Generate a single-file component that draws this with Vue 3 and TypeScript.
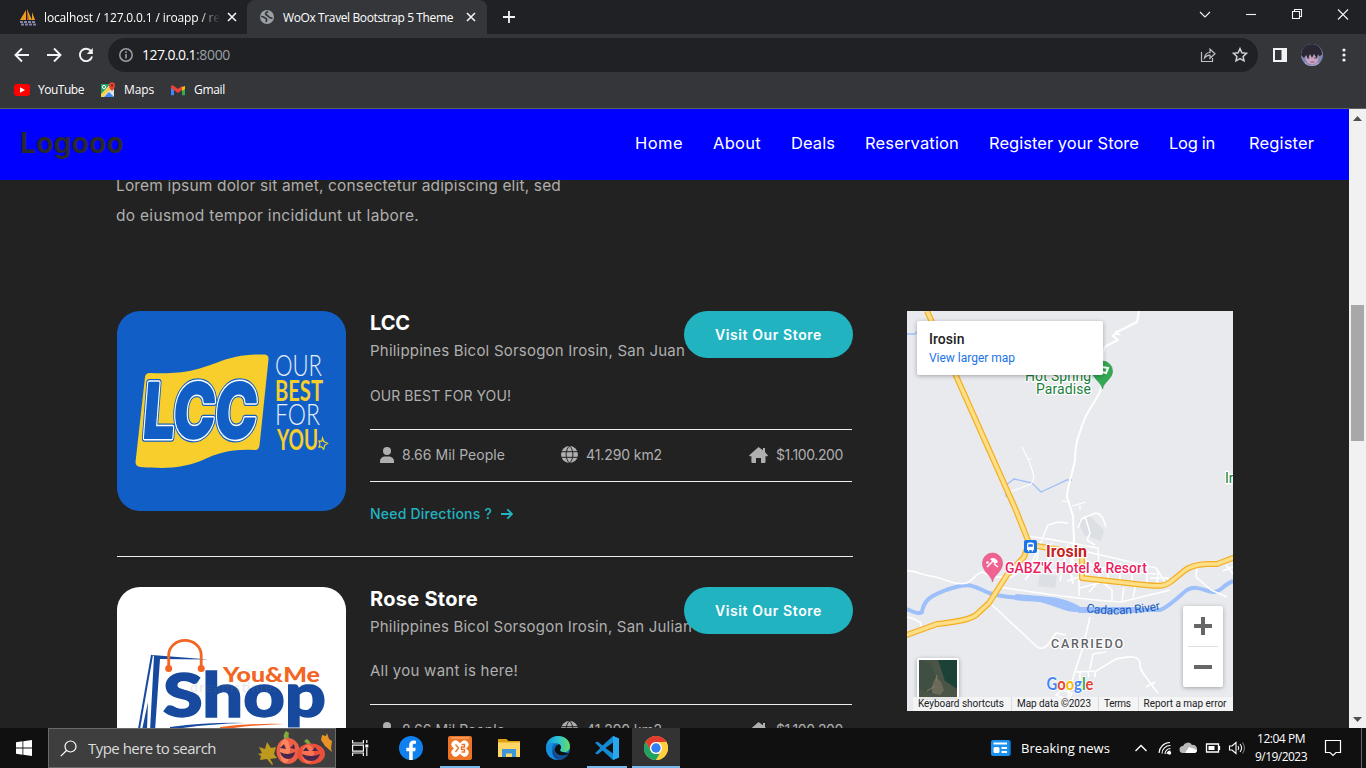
<script setup lang="ts">
import type { Directive } from 'vue'

interface Store {
  id: string
  name: string
  nameWidth: number
  place: string
  placeWidth: number
  blurb: string
  blurbWidth: number
}

interface NavLink {
  label: string
  width: number
  gap: number
}

// Tracks a single line of text so that it occupies the given width in pixels.
const fit = (el: HTMLElement, width: number) => {
  el.style.letterSpacing = '0px'
  const natural = el.getBoundingClientRect().width
  const count = (el.textContent ?? '').trim().length
  if (count > 0) el.style.letterSpacing = `${((width - natural) / count).toFixed(3)}px`
}
const vFit: Directive<HTMLElement, number> = {
  mounted: (el, binding) => fit(el, binding.value),
}

const links: NavLink[] = [
  { label: 'Home', width: 48, gap: 0 },
  { label: 'About', width: 48, gap: 30 },
  { label: 'Deals', width: 44, gap: 30 },
  { label: 'Reservation', width: 94, gap: 30 },
  { label: 'Register your Store', width: 150, gap: 30 },
  { label: 'Log in', width: 46, gap: 30 },
  { label: 'Register', width: 65, gap: 34 },
]

const stores: Store[] = [
  {
    id: 'lcc',
    name: 'LCC',
    nameWidth: 40,
    place: 'Philippines Bicol Sorsogon Irosin, San Juan',
    placeWidth: 315,
    blurb: 'OUR BEST FOR YOU!',
    blurbWidth: 141,
  },
  {
    id: 'rose',
    name: 'Rose Store',
    nameWidth: 108,
    place: 'Philippines Bicol Sorsogon Irosin, San Julian',
    placeWidth: 322,
    blurb: 'All you want is here!',
    blurbWidth: 148,
  },
]
</script>

<template>
  <div class="screen">
    <header class="browser">
      <div class="tabs">
        <div class="tab idle">
          <svg class="fav" width="18" height="18" viewBox="0 0 18 18">
            <path d="M1 12 7 2v10zM8 12V1l5 11zM13 4l3 8h-3z" fill="#f09a26" />
            <path d="M8 1l2 11H8z" fill="#a95f12" />
            <path d="M1 14h16M2 16.500h15" stroke="#8183a8" stroke-width="2" stroke-dasharray="3 1" />
          </svg>
          <span class="tab-text"><span v-fit="176">localhost / 127.0.0.1 / iroapp / re</span></span>
          <svg class="x" width="10" height="10" viewBox="0 0 10 10"><path d="M1 1l8 8M9 1l-8 8" /></svg>
        </div>
        <div class="tab active">
          <svg class="globe" width="14" height="14" viewBox="0 0 14 14">
            <circle cx="7" cy="7" r="7" fill="#9aa0a6" />
            <path d="M1 6.500c3 0 3.500 1.500 5 2 .8.400.7 2 0 3.500M12.500 8c-2 .5-3-.5-4-1.500S6 5 5.500 3.800 7 2.300 8 1.300" fill="none" stroke="#35363a" stroke-width="1.700" />
          </svg>
          <span v-fit="170" class="t">WoOx Travel Bootstrap 5 Theme</span>
          <svg class="x" width="10" height="10" viewBox="0 0 10 10"><path d="M1 1l8 8M9 1l-8 8" /></svg>
        </div>
        <svg class="plus" width="12" height="12" viewBox="0 0 12 12"><path d="M6 0v12M0 6h12" /></svg>
        <div class="window">
          <svg width="46" height="28" viewBox="0 0 46 28"><path d="M18 12l5 5 5-5" /></svg>
          <svg width="46" height="28" viewBox="0 0 46 28"><path d="M18 14.500h10" /></svg>
          <svg width="46" height="28" viewBox="0 0 46 28"><path d="M18.500 11.500h7v7h-7zM20.500 11V9.500h7v7H26" /></svg>
          <svg width="46" height="28" viewBox="0 0 46 28"><path d="M18 9.500l10 10M28 9.500l-10 10" /></svg>
        </div>
      </div>

      <div class="toolbar">
        <svg class="act" width="32" height="32" viewBox="0 0 32 32"><path d="M23 16H10M16 9.500L9.500 16l6.500 6.500" /></svg>
        <svg class="act" width="32" height="32" viewBox="0 0 32 32"><path d="M9 16h13M16 9.500l6.500 6.500-6.500 6.500" /></svg>
        <svg class="act" width="32" height="32" viewBox="0 0 32 32"><path d="M21.300 12.500a6.200 6.200 0 1 0 .8 5" /><path d="M22.800 9v6h-6z" fill="#f1f3f4" stroke="none" /></svg>
        <div class="omnibox">
          <svg width="14" height="14" viewBox="0 0 14 14"><circle cx="7" cy="7" r="6.200" fill="none" stroke="#9aa0a6" stroke-width="1.500" /><path d="M7 6v4.500M7 3.300v1.600" stroke="#9aa0a6" stroke-width="1.600" /></svg>
          <span class="url"><span v-fit="54">127.0.0.1</span><span v-fit="34" class="port">:8000</span></span>
          <svg class="share" width="16" height="16" viewBox="0 0 16 16"><path d="M1.500 5v9.500h11V11M4.500 11c.5-4 2.500-5.500 5.500-5.500V2.200L15 6.800l-5 4.500V8.200c-2.500 0-4 .8-5.500 2.800z" fill="none" stroke="#bdc1c6" stroke-width="1.200" /></svg>
          <svg width="16" height="16" viewBox="0 0 16 16"><path d="M8 1.600l1.900 4.200 4.600.5-3.400 3.100.9 4.500L8 11.600l-4 2.300.9-4.500L1.500 6.300l4.600-.5z" fill="none" stroke="#d0d2d6" stroke-width="1.500" /></svg>
        </div>
        <svg class="panel" width="14" height="14" viewBox="0 0 14 14"><path d="M0 0h14v14H0zM2 2v10h6.500V2z" fill="#f1f3f4" fill-rule="evenodd" /></svg>
        <svg class="avatar" width="22" height="22" viewBox="0 0 22 22">
          <defs><clipPath id="face"><circle cx="11" cy="11" r="11" /></clipPath></defs>
          <g clip-path="url(#face)">
            <path d="M0 0h22v22H0z" fill="#7c86b0" />
            <ellipse cx="11" cy="14" rx="6.500" ry="6.500" fill="#c9a5c4" />
            <path d="M0 11C1 3 5 0 11 0s10 4 10 11l-3 1-1-2-1 5-3-5-2 4-2-4-2 5-2-4-2 3z" fill="#2b2732" />
            <path d="M6 14h2.500M13 14h2.500" stroke="#543f5c" /><path d="M9.500 18h4" stroke="#a94b62" />
            <path d="M0 22l4-4 4 3h5l4-3 5 4z" fill="#a4a4c5" />
          </g>
        </svg>
        <svg class="dots" width="4" height="14" viewBox="0 0 4 14" fill="#f1f3f4"><circle cx="2" cy="2" r="1.600" /><circle cx="2" cy="7" r="1.600" /><circle cx="2" cy="12" r="1.600" /></svg>
      </div>

      <div class="bookmarks">
        <svg width="16" height="12" viewBox="0 0 16 12"><rect width="16" height="12" rx="3" fill="#f00" /><path d="M6 3.200v5.600L11 6z" fill="#fff" /></svg>
        <span v-fit="46" class="t yt">YouTube</span>
        <svg width="16" height="16" viewBox="0 0 16 16">
          <rect x="1" y="2" width="13" height="13" rx="1" fill="#dfe3e6" />
          <path d="M1 2h9L1 13z" fill="#20a464" /><path d="M4 15l5-5 5 5z" fill="#4086f4" /><path d="M1 15v-3l8-8 2 3-8 8z" fill="#f7d04c" />
          <circle cx="4" cy="5" r="1.600" fill="none" stroke="#fff" /><path d="M12 9C9 6 9 5 9 3.200a3 3 0 0 1 6 0C15 5 15 6 12 9z" fill="#e14435" /><circle cx="12" cy="3.400" r="1.100" fill="#8e1d14" />
        </svg>
        <span v-fit="30" class="t maps">Maps</span>
        <svg width="14" height="11" viewBox="0 0 14 11"><path d="M0 1v9.300h3V4z" fill="#4285f4" /><path d="M14 1v9.300h-3V4z" fill="#34a853" /><path d="M11 2l3-1v3l-3 2z" fill="#fbbc04" /><path d="M0 1.500C0 0 2 0 3 1l4 3 4-3v4L7 8 0 3z" fill="#ea4335" /></svg>
        <span v-fit="31" class="t">Gmail</span>
      </div>
    </header>

    <main class="viewport">
      <div class="page">
        <nav class="nav">
          <span v-fit="104" class="brand">Logooo</span>
          <span v-for="link in links" :key="link.label" v-fit="link.width" class="link" :style="{ marginLeft: link.gap + 'px' }">{{ link.label }}</span>
        </nav>

        <p class="intro">
          <span v-fit="445">Lorem ipsum dolor sit amet, consectetur adipiscing elit, sed</span><br />
          <span v-fit="303">do eiusmod tempor incididunt ut labore.</span>
        </p>

        <div class="columns">
          <section class="list">
            <article v-for="store in stores" :key="store.id" class="item">
              <svg v-if="store.id === 'lcc'" class="cover" width="229" height="200" viewBox="117 311 229 200">
                <defs><text id="lcc-mark" x="144" y="438.500" textLength="114" lengthAdjust="spacingAndGlyphs" font-family="Inter" font-weight="800" font-size="76" transform="translate(32 0) skewX(-4.500)">LCC</text></defs>
                <path d="M117 311h229v200H117z" fill="#115fc6" />
                <path d="M145 377q.5-4 5-4c35 1 43-2 66-10 17-7 32-9 49-8.500q4 .5 3.500 5l-9 86q-1 5-5 4.500c-24-1-34 2-54 11-19 7-32 8-60 6q-5-.5-5-5z" fill="#f7ce2b" />
                <use href="#lcc-mark" fill="#115fc6" stroke="#115fc6" stroke-width="7.500" stroke-linejoin="round" />
                <use href="#lcc-mark" fill="#fff" stroke="#fff" stroke-width="5" stroke-linejoin="round" />
                <use href="#lcc-mark" fill="#115fc6" stroke="#115fc6" stroke-width="2" stroke-linejoin="round" />
                <g font-family="Lato" font-size="29">
                  <g fill="#e9effa" font-weight="300"><text x="275" y="376" textLength="47" lengthAdjust="spacingAndGlyphs">OUR</text><text x="275" y="425" textLength="45" lengthAdjust="spacingAndGlyphs">FOR</text></g>
                  <g fill="#f7ce2b" font-weight="700"><text x="275" y="400.500" textLength="48" lengthAdjust="spacingAndGlyphs">BEST</text><text x="277" y="449.500" textLength="41" lengthAdjust="spacingAndGlyphs">YOU</text></g>
                </g>
                <path d="M322.500 438l1.300 3.500 3.800 1.800-3 2-.9 4-2.200-2.600-2.500.5 1-3.200-1-3 2.800.3z" fill="#115fc6" stroke="#f7ce2b" stroke-width="1.200" />
              </svg>
              <svg v-else class="cover" width="229" height="200" viewBox="117 587 229 200">
                <path d="M117 587h229v200H117z" fill="#fff" />
                <path d="M152 655l-13 74" fill="none" stroke="#174a9e" stroke-width="2" />
                <path d="M154 656h6v3l-5 72h-5z" fill="#174a9e" /><path d="M152 655l57 4.500-50-.5zM148 702l-6 28h5z" fill="#174a9e" />
                <text x="163" y="717" textLength="163" lengthAdjust="spacingAndGlyphs" font-family="Lato" font-weight="900" font-size="61" fill="#174a9e" stroke="#174a9e" stroke-width="1.500">Shop</text>
                <path d="M168.700 668v-13a16.200 14.500 0 0 1 32.500 0v13" fill="none" stroke="#f26522" stroke-width="2.800" /><circle cx="168.700" cy="668.500" r="3.500" fill="#f26522" /><circle cx="201.200" cy="668.500" r="3.500" fill="#f26522" />
                <text x="223" y="681.500" textLength="97" lengthAdjust="spacingAndGlyphs" font-family="Lato" font-weight="900" font-size="21" fill="#f26522">You&amp;Me</text>
                <text x="190" y="692" textLength="86" font-family="Lato" font-weight="700" font-size="14" fill="#777" fill-opacity=".16">dreamstime.</text>
                <path d="M170 727q40-5 75-4-40 1-75 7z" fill="#174a9e" /><path d="M220 727q30-4 65-3-35 1-65 6z" fill="#f26522" />
              </svg>

              <div class="info">
                <h4><span v-fit="store.nameWidth">{{ store.name }}</span></h4>
                <div class="place"><span v-fit="store.placeWidth">{{ store.place }}</span></div>
                <p class="blurb"><span v-fit="store.blurbWidth">{{ store.blurb }}</span></p>
                <ul class="stats">
                  <li>
                    <svg width="14" height="16" viewBox="0 0 14 16"><circle cx="7" cy="4" r="4" /><path d="M0 16v-1.500C0 11.500 2.500 9.600 5.500 9.600h3c3 0 5.500 1.900 5.500 4.900V16z" /></svg>
                    <span v-fit="103">8.66 Mil People</span>
                  </li>
                  <li class="area">
                    <svg width="17" height="17" viewBox="0 0 17 17"><circle cx="8.500" cy="8.500" r="8.500" /><path d="M0 5.700h17M0 11.300h17M8.500 0C4 4 4 13 8.500 17M8.500 0C13 4 13 13 8.500 17" fill="none" stroke="#222" /></svg>
                    <span v-fit="76">41.290 km2</span>
                  </li>
                  <li class="price">
                    <svg width="19" height="16" viewBox="0 0 19 16"><path d="M9.500 0L0 8.400l1 1 1.400-.4v6q0 1 1 1H7v-5h5v5h3.500q1 0 1-1V9l1.500.4 1-1L16 5V1h-2v2.300z" /></svg>
                    <span v-fit="67">$1.100.200</span>
                  </li>
                </ul>
                <div class="need">
                  <span v-fit="122">Need Directions ?</span>
                  <svg width="13" height="12" viewBox="0 0 13 12"><path d="M1 6h11M7.300 1.300L12 6l-4.700 4.700" /></svg>
                </div>
                <a class="visit"><span v-fit="107">Visit Our Store</span></a>
              </div>
            </article>
          </section>

          <svg class="map" width="326" height="400" viewBox="907 311 326 400">
            <path d="M907 311h326v400H907z" fill="#e8eaed" />
            <path d="M1078 521l12-5 14 14-3 11-17-6zM1040 573l17 3-2 12-17-2z" fill="#dcdfe3" />
            <g fill="none" stroke="#9dbffa">
              <path d="M907 334h8l4-4M1006 497l0-12 8-6 18 4 9 9 26-12h5" stroke-width="1.300" />
              <path d="M907 609c8 4 13 5 15 3 2-14 12-17 24-22 25-9 26-4 43 3 22 7 37 3 52 7 18 5 25 11 39 10h80c9-3 19-14 27-20 9-5 15 0 26 2 7 1 11-8 20-11" stroke-width="4" />
              <path d="M1015 597c25 3 43 0 65 13h60" stroke-width="6" />
            </g>
            <g fill="none" stroke="#fff" stroke-width="1.600" stroke-linejoin="round">
              <path d="M1139 311l-2 11-20 10-4 4 5 4-12 6c-4 4-3 9-3 27 0 25-12 28-20 50-6 17-8 23-8 37-3 15-8 27-8 37l6 19 1 25-4 28 3 15" stroke-width="2" />
              <path d="M1115 331l5 4-5-1M1022 447l6 12h4M1028 459c6 15 8 20 3 25l-21 8M1062 501l8 1M1072 506l14-4M1080 505v5" stroke-width="1.100" />
              <path d="M907 571c8-1 14 4 23 5 15 2 25 10 37 7 8-4 9-10 15-11l11 5h18l20-12 11-25M989 602l45 42q8 9 15-1l7-10 10 2" />
              <path d="M1027 536l27 4 44 8 1 20M1088 552l68 16 9 14M1040 542l-4 23-11 15M1052 543l-6 28 33-3M1068 544l-8 37M1073 548v20M1079 574v22M1099 561v20l-10 11M1110 561l-3 24M1120 563v23M1132 568v18M1147 569v16M1158 572l-1 13M1081 556l15 12h21M1086 568l70 6M1067 581l23-8M1080 588l22-6 10 8v11M1000 587c25 4 72 12 121 15l49-12M1150 578h18v5M1078 528l3-8q2-3 5-1l4 14-3 7 8 5M1083 518l13-5c7 1 8 9 10 14M1068 523l-10-1M1058 522l-10 3-5 12M1124 587l-2 14M1136 584l-3 13" stroke-width="1.500" />
              <path d="M1090 617l-7 30-14 43-1 10-8 9M1074 672l22-1 20-12c14-3 24-4 24 5-1 8 9 15 13 23l5 6M1080 672v12M1088 672l1 5M1095 671v6M1090 669l3-15 13-2M1062 690l10 3-3 7-13-5zM1146 687l9-5M1197 565l-1 12 15 13M1211 590l16 7M1223 571l10-4M1226 565l7 9M907 617l7 2 7 4v6" />
            </g>
            <defs><path id="highway" d="M927 311l30 67 58 130 14 35-5 14-17 18-18 28-13 12q-8 6-39 9l-33 12M1037 546l24 4 21 5v23l45 5c39 5 38 3 46-3l11-9q7-6 22-7h11l26-10" /></defs>
            <g fill="none" stroke-linejoin="round">
              <use href="#highway" stroke="#f4ae24" stroke-width="6" />
              <use href="#highway" stroke="#fddf87" stroke-width="3.500" />
            </g>
            <rect x="1024" y="540" width="13" height="13" rx="2" fill="#1a73e8" />
            <path d="M1027 544.500q0-2 2-2h3q2 0 2 2v5.500h-1v1.500h-1.300V550h-2.400v1.500H1028V550h-1zM1028.300 544.300v2.500h4.400v-2.500z" fill="#fff" fill-rule="evenodd" />
            <path d="M992.500 582c-1-7-10-10-10-19a10 10 0 0 1 20 0c0 9-9 12-10 19z" fill="#f06292" stroke="#d84c7e" stroke-width=".6" />
            <path d="M990 559q5-3 8 3l-3 2z" fill="#fff" /><path d="M993 561l-6 6M994 564l4 3" stroke="#fff" stroke-width="1.500" /><circle cx="987.500" cy="562.500" r="1.300" fill="#fff" />
            <path d="M1102.500 389c-1-7-10-10-10-18a10 10 0 0 1 20 0c0 8-9 11-10 18z" fill="#34a853" stroke="#1e8e3e" stroke-width=".6" /><path d="M1102 367l6 1-2 5-4-1" fill="none" stroke="#fff" stroke-width="2" />
            <g font-family="Roboto" paint-order="stroke" stroke="#fff" stroke-width="2.500" stroke-linejoin="round">
              <g fill="#188038" font-size="14"><text x="1025" y="380.500" textLength="66">Hot Spring</text><text x="1036" y="394" textLength="55">Paradise</text><text x="1225" y="483">Irosin</text></g>
              <text x="1046" y="557" textLength="41" font-size="16" font-weight="700" fill="#c5221f">Irosin</text>
              <text x="1005" y="573" textLength="142" font-size="14" font-weight="500" fill="#e91e63">GABZ'K Hotel &amp; Resort</text>
              <text x="1051" y="648" textLength="72" font-size="12.500" font-weight="500" fill="#5f6368">CARRIEDO</text>
            </g>
            <path id="river" d="M1086 612q35 6 77-3" fill="none" />
            <text font-family="Roboto" font-size="12" fill="#185abc"><textPath href="#river" textLength="75">Cadacan River</textPath></text>
            <rect x="917" y="658" width="42" height="45" rx="2" fill="#fff" class="shadow" />
            <path d="M919 660h38v40h-38z" fill="#4a5547" /><path d="M938 660h19v29l-12-8z" fill="#1c4238" /><path d="M919 660l12 3 6 17-4 14-14-5z" fill="#3f4f42" /><path d="M932 686l4-9 5 5 3 8-4 5-8-2z" fill="#6b6a59" /><path d="M927 691l8-5M937 675l-1 6" stroke="#857c6b" />
            <path d="M913 697h320v14H913z" fill="#f5f5f5" fill-opacity=".9" />
            <path d="M1011.500 697v14M1098.500 697v14M1138.500 697v14" stroke="#dcdde0" />
            <g font-family="Roboto" font-size="10" fill="#202124"><text x="918" y="707" textLength="86">Keyboard shortcuts</text><text x="1017" y="707" textLength="74">Map data ©2023</text><text x="1104" y="707" textLength="27">Terms</text><text x="1143.500" y="707" textLength="83">Report a map error</text></g>
            <text x="1046.500" y="689.500" textLength="47" lengthAdjust="spacingAndGlyphs" font-family="Lato" font-size="16.500" font-weight="700" paint-order="stroke" stroke="#fff" stroke-width="1.500"><tspan fill="#4285f4">G</tspan><tspan fill="#ea4335">o</tspan><tspan fill="#fbbc04">o</tspan><tspan fill="#4285f4">g</tspan><tspan fill="#34a853">l</tspan><tspan fill="#ea4335">e</tspan></text>
            <g class="shadow"><rect x="1183" y="606" width="40" height="81" rx="2" fill="#fff" /><rect x="917" y="321" width="186" height="54" rx="2" fill="#fff" /></g>
            <path d="M1188 646.500h30" stroke="#e0e0e0" /><path d="M1203 617v18M1194 626h18M1194 667h18" stroke="#666" stroke-width="4" />
            <text x="929" y="344" textLength="35.500" font-family="Roboto" font-size="14" font-weight="500" fill="#222">Irosin</text>
            <text x="929" y="362" textLength="86" font-family="Roboto" font-size="12" fill="#1a73e8">View larger map</text>
          </svg>
        </div>
      </div>

      <div class="scroll">
        <svg width="9" height="5" viewBox="0 0 9 5"><path d="M4.500 0L9 5H0z" fill="#505050" /></svg>
        <div class="track"><div class="thumb"></div></div>
        <svg width="9" height="5" viewBox="0 0 9 5"><path d="M0 0h9L4.500 5z" fill="#505050" /></svg>
      </div>
    </main>

    <footer class="taskbar">
      <div class="start"><svg width="16" height="16" viewBox="0 0 16 16" fill="#fff"><path d="M0 2.200l6.500-.9v6.300H0zM7.300 1.200L16 0v7.600H7.300zM0 8.400h6.500v6.300L0 13.800zM7.300 8.400H16V16l-8.700-1.200z" /></svg></div>
      <div class="search">
        <svg width="17" height="17" viewBox="0 0 17 17"><circle cx="10.500" cy="6.500" r="5.500" fill="none" stroke="#fff" stroke-width="1.200" /><path d="M6.500 10.500L.8 16.200" stroke="#fff" stroke-width="1.200" /></svg>
        <span v-fit="128" class="hint">Type here to search</span>
        <svg class="pumpkins" width="75" height="36" viewBox="259 730 75 36">
          <path d="M259 754l4-1-3-6 6 2 2-7 4 6 5-1-2 7 3 4-7 1 3 5-1 1-5-6-7 1 1-4z" fill="#bd9a1e" />
          <path d="M323 735l4 1 1-3 2 6 3 2-1 7 1 4-7-6-4-6z" fill="#e99226" />
          <path d="M286 741q-3-6 1-10l3 2q-2 5 3 8zM309 747q-1-4-4-6l3-2q5 4 4 8z" fill="#7fa83d" />
          <ellipse cx="289" cy="751" rx="11.500" ry="13" fill="#ee6045" /><ellipse cx="286" cy="751" rx="5" ry="12" fill="#ff8560" /><ellipse cx="312" cy="754" rx="14" ry="10.500" fill="#e9503a" /><ellipse cx="309" cy="754" rx="6" ry="9.500" fill="#fa7351" />
          <path d="M281 748l4-4 2 5zM291 748l4-4 1 5zM281 752q7 4 15 0-1 7-7 7t-8-7zM304 751l3-4 3 4zM313 751l3-4 3 4zM303 754q9 4 18 0-2 7-9 7t-9-7z" fill="#49264b" />
        </svg>
      </div>
      <div class="cell view"><svg width="17" height="16" viewBox="0 0 17 16" fill="none" stroke="#f4f4f4" stroke-width="1.200"><path d="M.6 0v3h10.800V0M.6 5.100h10.800v6H.6zM.6 16v-3h10.800V16M14.800 0v3M14.800 8v8" /><path d="M13.300 4.500h3v3h-3z" fill="#f4f4f4" stroke="none" /></svg></div>
      <div class="cell"><svg width="24" height="24" viewBox="0 0 24 24"><circle cx="12" cy="12" r="12" fill="#1080ee" /><path d="M10.200 24v-8.800H7.300v-3.500h2.900V9.300c0-3.200 1.500-4.800 4.700-4.800l2 .2v3.100h-1.500c-1.300 0-1.700.6-1.700 1.800v2.100h3l-.5 3.500h-2.500V24z" fill="#fff" /></svg></div>
      <div class="cell open"><svg width="24" height="24" viewBox="0 0 24 24"><rect width="24" height="24" rx="2" fill="#ec7426" /><path d="M3 2h18" stroke="#f9bb88" /><path d="M7.500 8.500L16.500 16.500M16.500 8.500L7.500 16.500" stroke="#fff" stroke-width="8" stroke-linecap="round" /><path d="M7.500 8.500l3 3.500-3 4M13.500 8.500h3v2.500h-3v2.500h3v2.500h-3" fill="none" stroke="#ec7426" stroke-width="1.400" /></svg></div>
      <div class="cell"><svg width="22" height="18" viewBox="0 0 22 18"><path d="M0 0h8.500l2 2H22v16H0z" fill="#dfa110" /><path d="M0 3.500h22V18H0z" fill="#ffd766" /><path d="M4 18v-8h14v8h-4v-3.500H8V18z" fill="#3e95da" /></svg></div>
      <div class="cell"><svg width="24" height="24" viewBox="0 0 24 24">
        <defs><linearGradient id="edge" x1="0" x2="1"><stop offset="0" stop-color="#1592df" /><stop offset=".5" stop-color="#2cc3d4" /><stop offset="1" stop-color="#67dc61" /></linearGradient></defs>
        <circle cx="12" cy="12" r="12" fill="#0c69bd" /><path d="M0 12C0 5 5 0 12 0c7 0 12 4.500 12 10.200 0 4-3 6-6 6-3.500 0-5-1.200-4-2.400 2.500-3 .4-6.600-4-6.600C5 7.200 1.500 9 0 12z" fill="url(#edge)" />
        <path d="M0 12c2-4.500 6-5.500 9.500-5C5 9 5 15 8 20q2 3 4 4C5 24 0 19 0 12z" fill="#168ddd" /><path d="M8.500 12c-1 5 4 9.500 9.500 8q3-.7 4.500-2.500C20 22 16 24 12 24 6 22 5 15 8.500 12z" fill="#134b91" /><path d="M14 13.800c2-2 .7-4.600-1-5.500-3 1-5 4-4 7 2 4.500 8 5.500 14 2.500l-5-1.600q-4 0-4-2.400z" fill="#101010" />
      </svg></div>
      <div class="cell open"><svg width="24" height="24" viewBox="0 0 24 24"><path d="M18 0l6 2.500v19L18 24 7.500 14.500 2.500 18.500 0 17.300 5.300 12 0 6.800l2.500-1.300 5 4zM18 6.500L10.500 12l7.500 5.500z" fill="#1689d3" fill-rule="evenodd" /><path d="M18 0l6 2.500v19L18 24z" fill="#29a8ef" /></svg></div>
      <div class="cell open current"><svg width="24" height="24" viewBox="0 0 24 24"><circle cx="12" cy="12" r="12" fill="#ffcd40" /><path d="M1.600 6A12 12 0 0 1 22.400 6H12a6 6 0 0 0-5.200 9z" fill="#e33b2e" /><path d="M1.600 6l5.200 9A6 6 0 0 0 12 18h4l-4 6A12 12 0 0 1 1.600 6z" fill="#1da462" /><path d="M17.200 15L12 24A12 12 0 0 0 22.400 6H12z" fill="#ffcd40" /><circle cx="12" cy="12" r="6" fill="#fff" /><circle cx="12" cy="12" r="4.700" fill="#327ef2" /></svg></div>

      <div class="news"><svg width="20" height="16" viewBox="0 0 20 16"><rect x="2" width="18" height="16" rx="2" fill="#0b63b4" /><rect width="18.500" height="16" rx="2" fill="#1c91ed" /><path d="M2.500 3.500h13.500M10.500 8h5.500M10.500 12h5.500" stroke="#fff" stroke-width="2" /><rect x="2.500" y="7" width="6" height="6" rx="1.500" fill="#fff" /></svg><span v-fit="89">Breaking news</span></div>
      <svg class="tray" width="24" height="24" viewBox="0 0 24 24"><path d="M6.500 15l5.500-5.500 5.500 5.500" stroke-width="1.400" /></svg>
      <svg class="tray" width="24" height="24" viewBox="0 0 24 24"><path d="M6 17C6.500 11 11 6.500 17 6.500M9 17.500C9 13 12.500 9.500 17.500 9.500M12 18c0-3 2.500-5.500 5.500-5.500" /><circle cx="16.500" cy="17" r="1.700" fill="#fff" stroke="none" /><path d="M14 18q.5-2.700 3.500-3" /></svg>
      <svg class="tray" width="24" height="24" viewBox="0 0 24 24"><path d="M6 17a3.500 3.500 0 0 1 0-7 5 5 0 0 1 9-1 4 4 0 0 1 5 4 4 4 0 0 1-2 4z" fill="#b9b9b9" stroke="none" /><path d="M8 17l4-6 8 3a3 3 0 0 1-2 3z" fill="#fff" stroke="none" /></svg>
      <svg class="tray" width="24" height="24" viewBox="0 0 24 24"><path d="M5.500 8h12v8h-12zM18.500 10v4" stroke-width="1.300" /><path d="M7.500 10h6v4h-6z" fill="#fff" stroke="none" /></svg>
      <svg class="tray" width="24" height="24" viewBox="0 0 24 24"><path d="M4.500 10h2.500l4-3.500v11L7 14H4.500zM13 10q1.500 2 0 4M15 8q3.200 4 0 8" /><path d="M17.500 6.500q4 5.500 0 11" stroke="#777" /></svg>
      <div class="clock"><span v-fit="48">12:04 PM</span><span v-fit="52">9/19/2023</span></div>
      <svg class="bell" width="40" height="40" viewBox="0 0 40 40"><path d="M12.500 12.500h15v12H23l-3 3-3-3h-4.500z" fill="none" stroke="#fff" stroke-width="1.200" /></svg>
      <div class="peek"></div>
    </footer>
  </div>
</template>

<style>
body { margin: 0; overflow: hidden; }
</style>

<style scoped>
.screen { width: 1366px; height: 768px; display: flex; flex-direction: column; overflow: hidden; background: #222; font-family: "Open Sans", sans-serif; color: #fff; }
.screen * { box-sizing: border-box; }
span { white-space: nowrap; display: inline-block; }
svg { flex: none; display: block; }

.browser { height: 109px; flex: none; background: #35363a; border-bottom: 1px solid #5f6064; font-size: 12px; }
.tabs { height: 34px; background: #202124; display: flex; align-items: center; }
.tab { height: 34px; display: flex; align-items: center; }
.idle { width: 247px; padding-left: 19px; }
.tab-text { width: 176px; margin: 0 7px; overflow: hidden; -webkit-mask-image: linear-gradient(90deg, #000 155px, transparent 176px); mask-image: linear-gradient(90deg, #000 155px, transparent 176px); }
.active { width: 240px; padding-left: 13px; background: #35363a; border-radius: 8px 8px 0 0; }
.active .t { margin: 0 13px 0 9px; }
.x { fill: none; stroke: #f1f3f4; stroke-width: 1.6; }
.plus { margin-left: 16px; stroke: #f1f3f4; stroke-width: 1.8; }
.window { margin-left: auto; display: flex; height: 28px; align-self: flex-start; fill: none; stroke: #f1f3f4; stroke-width: 1.1; }
.toolbar { height: 40px; display: flex; align-items: center; padding: 2px 0 0 6px; }
.act { fill: none; stroke: #f1f3f4; stroke-width: 1.9; }
.omnibox { width: 1150px; height: 34px; margin-left: 6px; border-radius: 17px; background: #202124; display: flex; align-items: center; padding: 0 10px 0 11px; font-size: 14px; }
.url { margin: -1px 0 0 9px; }
.port { color: #9aa0a6; }
.share { margin-left: auto; margin-right: 16px; }
.panel { margin-left: 15px; }
.avatar { margin-left: 14px; }
.dots { margin-left: 19px; }
.bookmarks { height: 32px; display: flex; align-items: center; padding-left: 14px; }
.bookmarks .t { margin-left: 8px; margin-top: -1px; }
.bookmarks .yt { margin-right: 16px; }
.bookmarks .maps { margin-right: 17px; }
.bookmarks .t:last-child { margin-left: 9px; }

.viewport { height: 619px; flex: none; display: flex; }
.page { width: 1349px; overflow: hidden; font-family: Inter, sans-serif; color: #afafaf; background: #222; }
.nav { position: relative; z-index: 2; height: 71px; background: #00f; display: flex; align-items: center; padding: 0 35px 3px 20px; }
.brand { font-size: 28px; font-weight: 700; color: #2a2a2a; margin-right: auto; }
.link { font-size: 16.5px; color: #fff; }
.intro { margin: -9px 0 80px 116px; font-size: 15.5px; line-height: 30px; }
.columns { display: flex; align-items: flex-start; padding-left: 117px; gap: 54px; }
.list { width: 736px; }
.item { height: 246px; border-bottom: 1px solid #eee; display: flex; align-items: flex-start; gap: 24px; margin-bottom: 30px; }
.cover { border-radius: 23px; }
.info { position: relative; width: 483px; font-size: 14px; }
h4 { margin: 0; font-size: 20px; line-height: 24px; font-weight: 700; color: #fff; }
.place { font-size: 15px; line-height: 32px; }
.blurb { margin: 14px 0 18px; line-height: 30px; }
.item + .item .blurb { margin: 13px 0 18px; font-size: 15px; }
.stats { list-style: none; width: 482px; height: 53px; margin: 0; padding: 0 9px 2px 10px; border: solid #eee; border-width: 1px 0; display: flex; align-items: center; }
.stats li { display: flex; align-items: center; gap: 8px; fill: #afafaf; }
.area { margin-left: 56px; }
.price { margin-left: auto; }
.need { margin-top: 17px; line-height: 30px; color: #22b3c1; font-weight: 500; display: flex; align-items: center; gap: 8px; }
.need svg { fill: none; stroke: #22b3c1; stroke-width: 1.8; }
.visit { position: absolute; top: 0; right: 0; width: 169px; height: 47px; padding-bottom: 1px; border-radius: 24px; background: #22b3c1; color: #fff; font-weight: 600; display: flex; align-items: center; justify-content: center; }
.map { overflow: hidden; }
.shadow { filter: drop-shadow(0 1px 2px rgba(0, 0, 0, 0.3)); }

.scroll { width: 17px; background: #f1f1f1; display: flex; flex-direction: column; align-items: center; padding: 7px 0 6px; }
.track { flex: 1; width: 13px; padding-top: 184px; }
.thumb { height: 136px; background: #a8a8a8; }

.taskbar { height: 40px; flex: none; background: #101010; display: flex; align-items: center; font-size: 13px; }
.start { width: 48px; display: flex; justify-content: center; }
.search { width: 288px; height: 40px; background: #3e3e3e; border: 1px solid #6a6a6a; display: flex; align-items: center; padding: 0 2px 0 11px; }
.hint { font-size: 15px; color: #dcdcdc; margin-left: 11px; }
.pumpkins { margin-left: auto; }
.cell { width: 48px; height: 40px; margin-right: 1px; display: flex; align-items: center; justify-content: center; position: relative; }
.view { margin-right: 3px; }
.open::after { content: ""; position: absolute; left: 4px; right: 4px; bottom: 0; height: 2px; background: #76b9ed; }
.current { background: #333; }
.current::after { left: 0; right: 0; }
.news { margin-left: auto; width: 121px; display: flex; align-items: center; gap: 10px; margin-right: 17px; }
.tray { fill: none; stroke: #fff; stroke-width: 1.1; }
.clock { width: 64px; display: flex; flex-direction: column; align-items: center; font-size: 12px; line-height: 18px; }
.peek { width: 5px; height: 40px; margin-left: 8px; border-left: 1px solid #666; }
</style>
